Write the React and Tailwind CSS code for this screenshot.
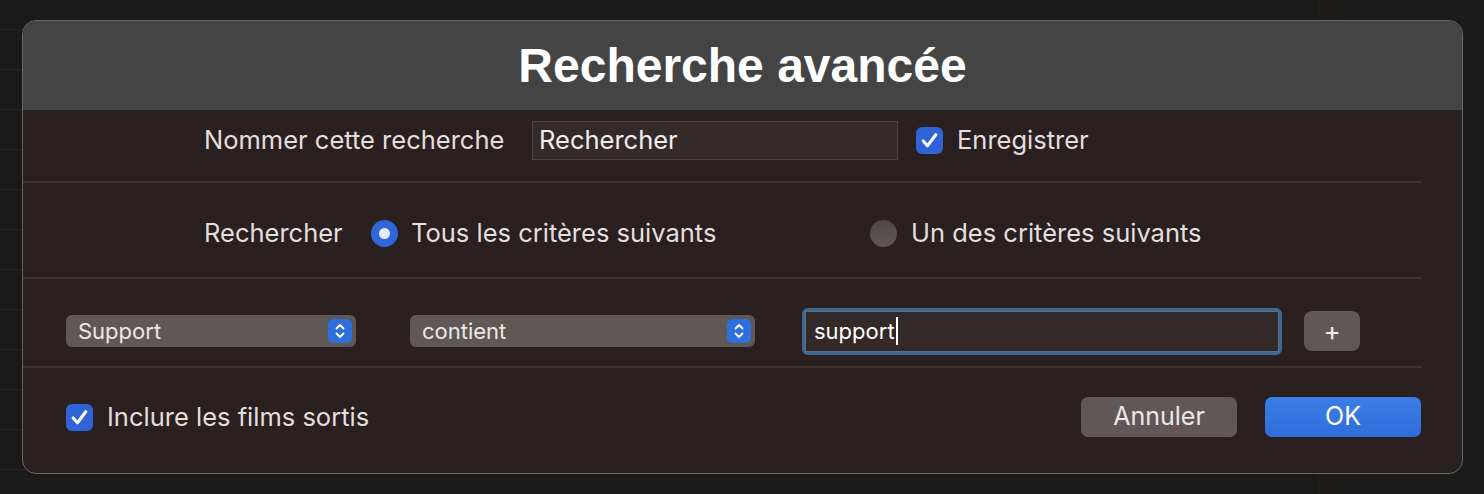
import React from "react";

const sans = "font-['Inter','Noto_Sans',sans-serif]";

function Checkbox() {
  return (
    <span className="flex h-[27px] w-[27px] items-center justify-center rounded-[6px] bg-[#2f63d6]">
      <svg width="21" height="21" viewBox="0 0 20 20" fill="none">
        <path d="M4 10.5l4 4.5 8-10.5" stroke="#f4f6fc" strokeWidth="3" strokeLinecap="round" strokeLinejoin="round" />
      </svg>
    </span>
  );
}

function Radio({ checked }) {
  if (checked) {
    return (
      <span className="flex h-[27px] w-[27px] items-center justify-center rounded-full bg-[#2f66d8]">
        <span className="h-[11px] w-[11px] rounded-full bg-[#e4ebfa]" />
      </span>
    );
  }
  return <span className="h-[27px] w-[27px] rounded-full bg-[linear-gradient(#4f4847,#5f5856)]" />;
}

function Stepper() {
  return (
    <span className="flex h-[24px] w-[24px] items-center justify-center rounded-[5px] bg-[#2f6fdb]">
      <svg width="12" height="18" viewBox="0 0 12 18" fill="none">
        <path d="M2.5 6.5L6 3l3.5 3.5M2.5 11.5L6 15l3.5-3.5" stroke="#ffffff" strokeWidth="1.8" strokeLinecap="round" strokeLinejoin="round" />
      </svg>
    </span>
  );
}

function Popup({ label, width }) {
  return (
    <div className={`flex h-[32px] items-center justify-between rounded-[6px] bg-[#5f5856] pl-[12px] pr-[4px] ${width}`}>
      <span className="text-[22px] text-[#ece8e7]">{label}</span>
      <Stepper />
    </div>
  );
}

function Divider() {
  return <div className="mr-[40px] h-[2px] bg-[#3d3332]" />;
}

export default function App() {
  return (
    <div className={`relative h-[494px] w-[1484px] overflow-hidden bg-[#1a1a1a] ${sans}`}>
      {/* window behind the sheet */}
      <div className="flex h-full">
        <div className="h-full w-[1318px] bg-[repeating-linear-gradient(to_bottom,#1a1a1a_0px,#1a1a1a_29px,#262524_29px,#262524_30px,#1a1a1a_30px,#1a1a1a_40px)]" />
        <div className="h-full w-[22px] bg-[#211c1a]" />
        <div className="h-full flex-1 bg-[#1c1c1c]" />
      </div>

      {/* sheet */}
      <div className="absolute left-[22px] top-[20px] w-[1441px] overflow-hidden rounded-[14px] border border-[#6a6867] bg-[#2a2020]">
        <div className="flex h-[89px] items-center justify-center bg-[#444444]">
          <h1 className="font-['Liberation_Sans',Arial,sans-serif] text-[48px] font-bold text-white">Recherche avancée</h1>
        </div>

        <div className="flex h-[71px] items-center pb-[11px] pl-[181px] text-[25.5px] text-[#e3dfde]">
          <span className="w-[328px]">Nommer cette recherche</span>
          <div className="flex h-[39px] w-[366px] items-center border border-[#4d4342] bg-[#342a29] px-[6px] text-[#f1eeee]">Rechercher</div>
          <span className="ml-[18px]"><Checkbox /></span>
          <span className="ml-[14px]">Enregistrer</span>
        </div>
        <Divider />

        <div className="flex h-[94px] items-center pt-[6px] pl-[181px] text-[25.5px] text-[#e3dfde]">
          <span className="w-[167px]">Rechercher</span>
          <Radio checked />
          <span className="ml-[13px] w-[459px]">Tous les critères suivants</span>
          <Radio />
          <span className="ml-[14px]">Un des critères suivants</span>
        </div>
        <Divider />

        <div className="flex h-[87px] items-center pt-[17px] pl-[43px]">
          <Popup label="Support" width="w-[290px]" />
          <div className="ml-[54px]"><Popup label="contient" width="w-[345px]" /></div>
          <div className="ml-[47px] rounded-[6px] bg-[#3e6890] p-[3px]">
            <div className="flex h-[41px] w-[474px] items-center border border-[#566f8a] bg-[#332928] px-[8px] text-[22px] text-white">
              support<span className="ml-[1px] h-[28px] w-[2px] bg-white" />
            </div>
          </div>
          <button className="ml-[22px] flex h-[40px] w-[56px] items-center justify-center rounded-[8px] bg-[#5f5856] text-[26px] leading-none text-[#f1eeee]">+</button>
        </div>
        <Divider />

        <div className="flex h-[105px] items-center pb-[7px] pl-[43px] pr-[41px]">
          <Checkbox />
          <span className="ml-[14px] text-[25.5px] text-[#e3dfde]">Inclure les films sortis</span>
          <div className="ml-auto flex gap-[28px]">
            <button className="h-[40px] w-[156px] rounded-[7px] bg-[#5f5856] text-[25px] text-[#ece8e7]">Annuler</button>
            <button className="h-[40px] w-[156px] rounded-[7px] bg-[linear-gradient(#3a7ee6,#2f6ddb)] text-[25px] text-white">OK</button>
          </div>
        </div>
      </div>
    </div>
  );
}
